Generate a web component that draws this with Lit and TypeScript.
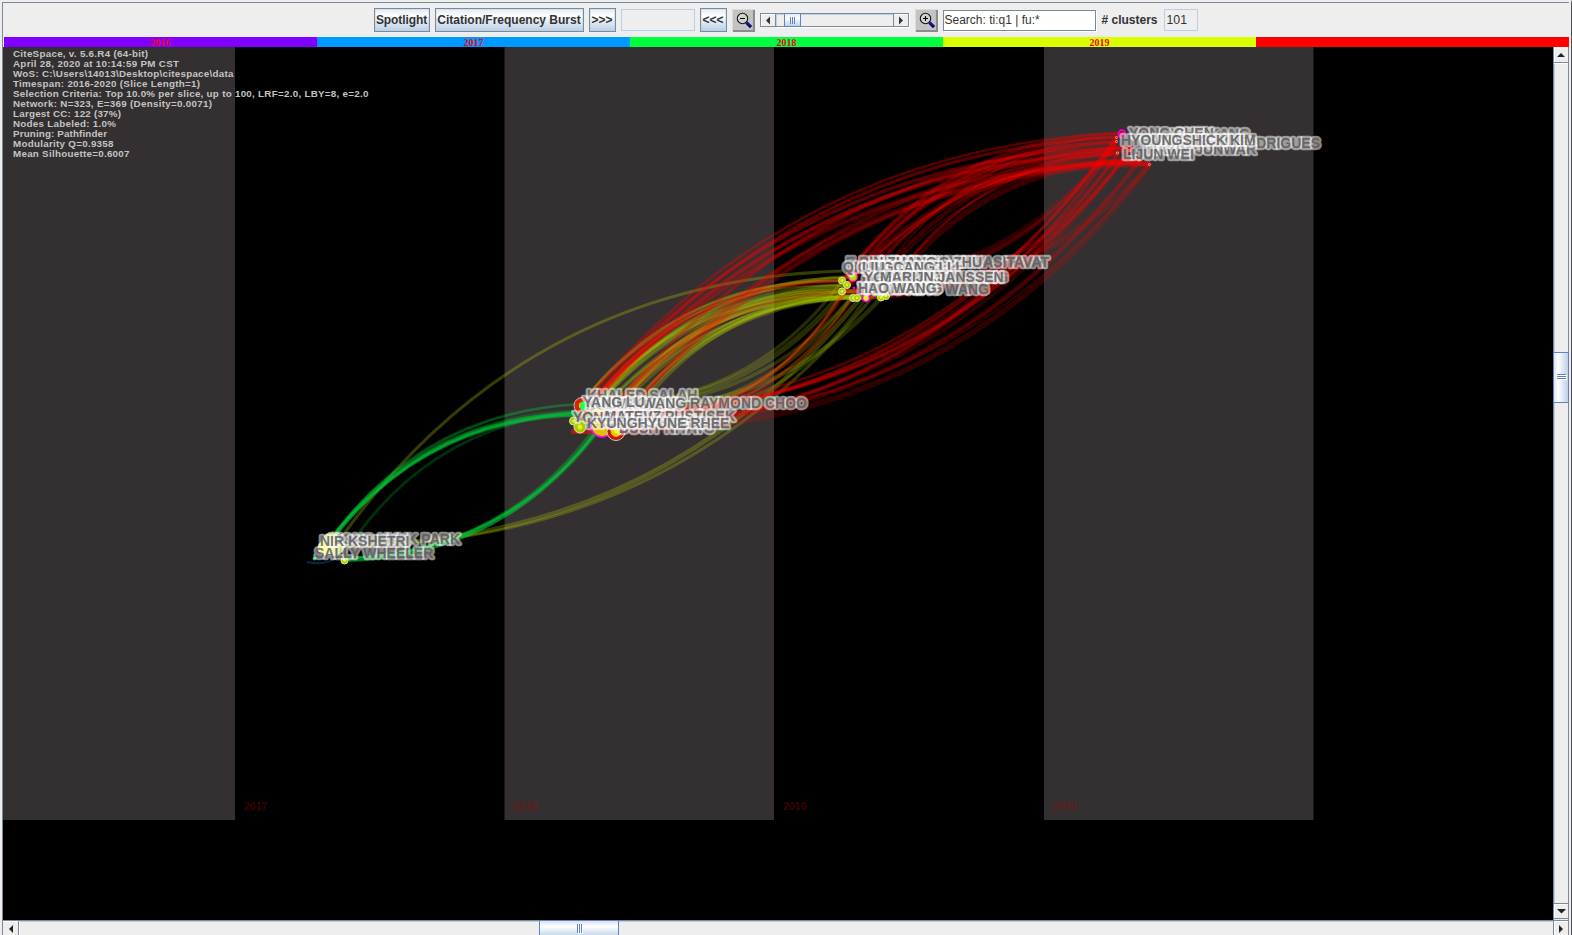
import { LitElement, html, css, svg } from "lit";
import { customElement } from "lit/decorators.js";

type Pt = [number, number];

interface Bundle {
  from: Pt[];
  to: Pt[];
  bend: number;
  count: number;
  color: string;
  alpha: number;
}

interface Label {
  text: string;
  x: number;
  y: number;
  end?: boolean;
}

const RED = "#ff0000";
const YELLOW = "#c0dc00";
const GREEN = "#00d83c";

const hub2018: Pt[] = [[580, 405], [600, 426], [585, 411], [608, 420], [598, 414], [615, 432], [582, 424]];
const hub2019: Pt[] = [[842, 281], [852, 297], [847, 286], [866, 298], [853, 277], [882, 297], [842, 292], [857, 291]];
const hub2020: Pt[] = [[1121, 133], [1117, 142], [1150, 164], [1116, 137], [1128, 151], [1118, 154], [1140, 160], [1133, 147]];

const bundles: Bundle[] = [
  { from: [[336, 545]], to: [[842, 271]], bend: -1, count: 1, color: YELLOW, alpha: 0.28 },
  { from: [[344, 545]], to: [[878, 290], [870, 286]], bend: 0.97, count: 2, color: YELLOW, alpha: 0.25 },
  { from: [[325, 548], [321, 553], [328, 544]], to: [[580, 404], [579, 414], [581, 412], [582, 415]], bend: -1, count: 9, color: GREEN, alpha: 0.2 },
  { from: [[345, 553]], to: [[585, 411]], bend: -1, count: 1, color: GREEN, alpha: 0.22 },
  { from: [[344, 560], [338, 558], [325, 550]], to: [[602, 424], [598, 425], [606, 420]], bend: 1, count: 8, color: GREEN, alpha: 0.2 },
  { from: hub2018, to: hub2019, bend: -1, count: 19, color: YELLOW, alpha: 0.24 },
  { from: [[620, 420], [625, 428]], to: [[866, 298], [857, 293]], bend: -1.02, count: 2, color: YELLOW, alpha: 0.25 },
  { from: [[585, 411], [604, 420]], to: [[842, 281], [860, 291]], bend: -1, count: 3, color: RED, alpha: 0.2 },
  { from: [[600, 405], [640, 424], [615, 416]], to: hub2019, bend: 1, count: 9, color: YELLOW, alpha: 0.2 },
  { from: [[640, 425]], to: [[853, 277], [857, 291]], bend: 1, count: 3, color: RED, alpha: 0.2 },
  { from: [[582, 405], [600, 426], [585, 411], [580, 418], [614, 430]], to: hub2020, bend: -0.9, count: 18, color: RED, alpha: 0.19 },
  { from: [[600, 414], [615, 432], [608, 420], [598, 414], [601, 428]], to: hub2020, bend: 1, count: 16, color: RED, alpha: 0.18 },
  { from: hub2019, to: hub2020, bend: -1, count: 17, color: RED, alpha: 0.21 },
  { from: hub2019, to: hub2020, bend: 1, count: 9, color: RED, alpha: 0.16 },
];

const widths = [3, 2, 4.5, 2.5, 5.5, 2, 3.5];

const labels: Label[] = [
  { text: "JONG HYUK PARK", x: 460, y: 544, end: true },
  { text: "NIR KSHETRI", x: 320, y: 545.5 },
  { text: "SALLY WHEELER", x: 315, y: 558 },
  { text: "PENG ZHANG", x: 590, y: 410 },
  { text: "KHALED SALAH", x: 587, y: 400 },
  { text: "XUEYING LIU", x: 586, y: 409 },
  { text: "KIM-KWANG RAYMOND CHOO", x: 807, y: 408, end: true },
  { text: "DUSIT NIYATO", x: 715, y: 432.5, end: true },
  { text: "YANG LU", x: 583, y: 407 },
  { text: "QIANG WANG", x: 605, y: 425 },
  { text: "MARKO HOLBL", x: 602, y: 427 },
  { text: "YONG YUAN", x: 573, y: 421.5 },
  { text: "MATEVZ PUSTISEK", x: 735, y: 420.5, end: true },
  { text: "KYUNGHYUNE RHEE", x: 587, y: 427.5 },
  { text: "E BURAK PUNYASITAVAT", x: 1049, y: 267, end: true },
  { text: "LIANMING ZHU", x: 982, y: 267, end: true },
  { text: "E BIN ZHANG", x: 846, y: 267 },
  { text: "QI LIU", x: 843, y: 272 },
  { text: "GUOCANG LI", x: 870, y: 272 },
  { text: "QINGCANG LI", x: 951, y: 272, end: true },
  { text: "LIU", x: 862, y: 272 },
  { text: "LEI ZHANG", x: 862, y: 287 },
  { text: "YGE LIANG", x: 864, y: 282 },
  { text: "GUANJUN JIANG", x: 1008, y: 281.5, end: true },
  { text: "MARIJN JANSSEN", x: 880, y: 281.5 },
  { text: "FENG XIAO WANG", x: 989, y: 294, end: true },
  { text: "YAO HUANG", x: 858, y: 293 },
  { text: "HAO WANG", x: 858, y: 293 },
  { text: "JOEL J P C RODRIGUES", x: 1320, y: 147.5, end: true },
  { text: "XIAO KANG", x: 1250, y: 139, end: true },
  { text: "YONG CHEN", x: 1129, y: 137.5 },
  { text: "NAZIM JUNWAR", x: 1256, y: 154, end: true },
  { text: "HAYOUNG KIM", x: 1140, y: 145 },
  { text: "HYOUNGSHICK KIM", x: 1121, y: 144.5 },
  { text: "LIJUN WEI", x: 1123, y: 158.5 },
];

const info = [
  { t: "CiteSpace, v. 5.6.R4 (64-bit)", w: 135 },
  { t: "April 28, 2020 at 10:14:59 PM CST", w: 166 },
  { t: "WoS: C:\\Users\\14013\\Desktop\\citespace\\data", w: 220.5 },
  { t: "Timespan: 2016-2020 (Slice Length=1)", w: 187 },
  { t: "Selection Criteria: Top 10.0% per slice, up to 100, LRF=2.0, LBY=8, e=2.0", w: 355.5 },
  { t: "Network: N=323, E=369 (Density=0.0071)", w: 199 },
  { t: "Largest CC: 122 (37%)", w: 108 },
  { t: "Nodes Labeled: 1.0%", w: 103 },
  { t: "Pruning: Pathfinder", w: 94 },
  { t: "Modularity Q=0.9358", w: 100.5 },
  { t: "Mean Silhouette=0.6007", w: 116.5 },
];

// Quadratic arc whose control point sits a quarter chord off the midpoint.
function arc(a: Pt, b: Pt, bend: number): string {
  const dx = b[0] - a[0];
  const dy = b[1] - a[1];
  const cx = (a[0] + b[0]) / 2 - dy * 0.25 * bend;
  const cy = (a[1] + b[1]) / 2 + dx * 0.25 * bend;
  return `M${a[0]} ${a[1]}Q${cx.toFixed(1)} ${cy.toFixed(1)} ${b[0]} ${b[1]}`;
}

@customElement("app-root")
export class AppRoot extends LitElement {
  static styles = css`
    :host {
      display: block;
      width: 100vw;
      height: 100vh;
      overflow: hidden;
      background: #eee;
      font-family: "Liberation Sans", Arial, sans-serif;
      color: #333;
    }
    * { box-sizing: border-box; }
    .window {
      height: 100%;
      display: grid;
      grid-template-rows: 35px 10px 1fr;
      padding: 0 2px 0 2px;
      border-top: 2px solid #eee;
      background: linear-gradient(#7a8a99, #7a8a99) 2px 0 / 1px 100% no-repeat, #eee;
      border-right: 1px solid #4b4b50;
    }
    .toolbar {
      display: flex;
      align-items: center;
      justify-content: center;
      gap: 5px;
      border-top: 1px solid #7a8a99;
      font-size: 12px;
    }
    .btn {
      height: 24px;
      border: 1px solid #7a8a99;
      box-shadow: inset 0 0 0 1px #b8cfe566;
      background: linear-gradient(#e2ebf4, #fff 32%, #eef3f8 45%, #b8cfe5);
      font-weight: bold;
      display: flex;
      align-items: center;
      justify-content: center;
      white-space: nowrap;
    }
    .spot { width: 56px; letter-spacing: -0.15px; }
    .spot { letter-spacing: -0.1px; }
    .burst { width: 149px; }
    .nav { width: 27px; }
    .field {
      height: 22px;
      border: 1px solid #b8cfe5;
      width: 74px;
      padding-left: 2px;
      line-height: 20px;
      font-size: 12.3px;
    }
    .num { width: 34px; margin-left: 1px; }
    .search {
      width: 153px;
      height: 21px;
      background: #fff;
      border: 1px solid #7a8a99;
      box-shadow: 1px 1px 0 #fff;
      padding-left: 1px;
      line-height: 19px;
      white-space: nowrap;
    }
    .zoom { width: 23px; height: 23px; display: block; }
    .clusters { font-weight: bold; width: 56px; margin-left: 1px; white-space: nowrap; }
    .slider { width: 150px; height: 15px; display: block; }
    .years {
      display: grid;
      grid-template-columns: repeat(5, 1fr);
      margin-left: 2px;
      font: bold 10px/11px "Liberation Serif", serif;
      color: #f00020;
      text-align: center;
    }
    .y16 { background: #8000ff; }
    .y17 { background: #0099ff; }
    .y18 { background: #00ff40; }
    .y19 { background: #d9ff00; }
    .y20 { background: #ff0000; color: #ff0000; }
    .view {
      display: grid;
      grid-template-columns: 1550px 16px;
      grid-template-rows: 873px 15px;
      margin-left: 1px;
    }
    svg { display: block; }
    .label {
      font: bold 14px "Liberation Sans", Arial, sans-serif;
      fill: #5c5c5c;
      fill-opacity: 0.85;
      stroke: #fff;
      stroke-opacity: 0.54;
      stroke-width: 4.5px;
      stroke-linejoin: round;
      paint-order: stroke;
    }
    .info { font: bold 9.8px "Liberation Sans", Arial, sans-serif; fill: #c4c4c4; }
    .slice { font: bold 10.5px "Liberation Sans", Arial, sans-serif; fill: #a80000; fill-opacity: 0.38; }
  `;

  private edges() {
    return bundles.map((b) =>
      Array.from({ length: b.count }, (_, i) => {
        const a = b.from[(i * 3 + (i >> 2)) % b.from.length];
        const e = b.to[(i * 5 + (i >> 3)) % b.to.length];
        return svg`<path d=${arc(a, e, b.bend)} fill="none" stroke=${b.color}
          stroke-opacity=${b.alpha} stroke-width=${widths[(i * 2) % 7]} />`;
      })
    );
  }

  private node(x: number, y: number, r: number, ring = "#d8e8a0", fill = "#a8cc00") {
    return svg`<circle cx=${x} cy=${y} r=${r} fill=${fill} stroke=${ring} stroke-width="1" />
      <circle cx=${x} cy=${y} r=${r * 0.4} fill="#ffff30" fill-opacity="0.7" />`;
  }

  private nodes() {
    return svg`
      <path d="M307 562Q323 566 336 558" fill="none" stroke="#003a5c" stroke-width="2" stroke-opacity=".75" />
      <rect x="571" y="429" width="34" height="5" rx="2" fill="#cc1818" fill-opacity=".75" />
      ${this.node(333, 544, 12, "#aaa", "#c8d860")}
      ${this.node(325, 548, 7, "#dde890", "#e0e830")}
      ${this.node(344.5, 560.5, 3.5)}
      ${this.node(314.5, 558.5, 1.5, "#20d070", "#20d070")}
      ${this.node(582, 405.5, 8, "#bbb", "#e02000")}
      <circle cx="584" cy="406" r="4.5" fill="#20ff40" />
      ${this.node(573.5, 421, 4)}
      ${this.node(580, 427, 6)}
      <circle cx="602" cy="426" r="11" fill="#e0c000" stroke="#ff00ff" stroke-width="1.6" />
      ${this.node(616, 431.5, 9, "#ccc", "#d01000")}
      ${this.node(616, 431.5, 5, "#e0c000", "#e0d000")}
      ${this.node(598, 411, 5, "#ff5020", "#ffd060")}
      ${([[842, 280.5], [842, 291.5], [847, 285], [853, 298], [857, 298], [881, 297.5], [886, 296]] as Pt[]).map(([x, y]) => this.node(x, y, 3.5))}
      <circle cx="853" cy="277" r="4" fill="#b8dc00" stroke="#ff40d0" stroke-width="1.4" />
      <circle cx="866" cy="298" r="3.5" fill="#e8f020" stroke="#ff00e0" stroke-width="1.6" />
      <circle cx="854" cy="288" r="1.3" fill="#ff00e0" />
      <ellipse cx="1122" cy="134" rx="3.5" ry="4" fill="#c00030" stroke="#ff00e0" stroke-width="1.5" />
      ${([[1116.5, 137.5], [1116.5, 141.5], [1117.5, 153], [1139, 160], [1149.5, 164.5], [1129.5, 150.5]] as Pt[]).map(
        ([x, y]) => svg`<circle cx=${x} cy=${y} r="1.1" fill="#d00000" stroke="#ffb0b0" stroke-width=".8" />`
      )}`;
  }

  private graph() {
    return html`<svg width="1550" height="873" viewBox="3 47 1550 873">
      <rect x="3" y="47" width="1550" height="873" fill="#000" />
      ${[[3, 232], [504.5, 269.5], [1044, 269.5]].map(
        ([x, w]) => svg`<rect x=${x} y="47" width=${w} height="773" fill="#342f30" />`
      )}
      ${this.edges()}
      ${this.nodes()}
      ${labels.map(
        (l) => svg`<text class="label" x=${l.x} y=${l.y} text-anchor=${l.end ? "end" : "start"}>${l.text}</text>`
      )}
      ${info.map(
        (l, i) => svg`<text class="info" x="13" y=${57 + i * 10} textLength=${l.w}>${l.t}</text>`
      )}
      ${["2017", "2018", "2019", "2020"].map(
        (t, i) => svg`<text class="slice" x=${244 + i * 269.6} y="810">${t}</text>`
      )}
    </svg>`;
  }

  private magnifier(plus: boolean) {
    return html`<svg class="zoom" viewBox="0 0 23 23">
      <rect width="23" height="23" fill="#c3c3c3" />
      <path d="M.5 23V.5H23" fill="none" stroke="#dcdcdc" />
      <path d="M1 22H22V1" fill="none" stroke="#8c8c8c" stroke-width="2.2" />
      <circle cx="10.5" cy="9.5" r="5.2" fill="#d3d3d3" stroke="#111" stroke-width="1.1" />
      <path d="M8 9.5h5${plus ? "M10.5 7v5" : ""}" stroke="#000" stroke-width="1.1" />
      <path d="M14.5 13.5L19 18.2" stroke="#000060" stroke-width="3.2" />
      <path d="M14.5 13L18.5 17.2" stroke="#3030c8" stroke-width="1" />
    </svg>`;
  }

  private slider() {
    return html`<svg class="slider" viewBox="0 0 150 15">
      <defs><linearGradient id="thumb" x2="0" y2="1">
        <stop offset="0" stop-color="#dde8f3" /><stop offset=".35" stop-color="#fff" />
        <stop offset="1" stop-color="#b8cfe5" /></linearGradient></defs>
      <rect x=".5" y=".5" width="148" height="13" fill="#eee" stroke="#7a8a99" />
      <path d="M1.5 13V1.5H148M17 14.5H150M149.5 0V15" stroke="#fff" fill="none" />
      <path d="M15.5 1V13M133.5 1V13" stroke="#7a8a99" />
      <path d="M16 1.5H133M16.5 1V13" stroke="#b8cfe5" />
      <path d="M10 3.5V11.5L6 7.5ZM139 3.5V11.5L143 7.5Z" fill="#333" />
      <rect x="24.5" y=".5" width="16" height="13" fill="url(#thumb)" stroke="#6382bf" />
      <path d="M30.5 4V11M32.5 4V11M34.5 4V11" stroke="#6382bf" />
    </svg>`;
  }

  private vbar() {
    return html`<svg width="16" height="873" viewBox="0 0 16 873">
      <defs><linearGradient id="v"><stop offset="0" stop-color="#d3e0ee" /><stop offset=".3" stop-color="#fff" />
        <stop offset="1" stop-color="#b8cfe5" /></linearGradient></defs>
      <rect width="16" height="873" fill="#eee" />
      <path d="M.5 0V873M15.5 0V873" stroke="#7a8a99" />
      <path d="M1.5 17V856" stroke="#b8cfe5" />
      <path d="M0 15.5H16M0 856.5H16M0 871.5H16" stroke="#7a8a99" />
      <path d="M1.5 0V15M1.5 857V871M1 16.5H15M1 857.5H15" stroke="#fff" />
      <path d="M4 10H12L8 6ZM4 862H13L8.5 866.5Z" fill="#222" />
      <rect x=".5" y="305.5" width="15" height="50" fill="url(#v)" stroke="#6382bf" />
      <path d="M4 327.5H13M4 329.5H13M4 331.5H13" stroke="#fff" transform="translate(1 1)" />
      <path d="M4 327.5H13M4 329.5H13M4 331.5H13" stroke="#6382bf" />
    </svg>`;
  }

  private hbar() {
    return html`<svg width="1566" height="15" viewBox="0 0 1566 15">
      <defs><linearGradient id="h" x2="0" y2="1"><stop offset="0" stop-color="#d3e0ee" /><stop offset=".35" stop-color="#fff" />
        <stop offset="1" stop-color="#b8cfe5" /></linearGradient></defs>
      <rect width="1566" height="15" fill="#eee" />
      <path d="M0 .5H1566M15.5 0V15M1550.5 0V15M1565.5 0V15" stroke="#7a8a99" />
      <path d="M16 1.5H1550" stroke="#b8cfe5" />
      <path d="M0 1.5H15M16.5 1V15M1551 1.5H1565M1551.5 1V15" stroke="#fff" />
      <path d="M10 5V13L6 9ZM1556 5V13L1560 9Z" fill="#222" />
      <rect x="536.5" y=".5" width="79" height="17" fill="url(#h)" stroke="#6382bf" />
      <path d="M574.5 4V13M576.5 4V13M578.5 4V13" stroke="#fff" transform="translate(1 1)" />
      <path d="M574.5 4V13M576.5 4V13M578.5 4V13" stroke="#6382bf" />
    </svg>`;
  }

  render() {
    return html`<div class="window">
      <div class="toolbar">
        <div class="btn spot">Spotlight</div>
        <div class="btn burst">Citation/Frequency Burst</div>
        <div class="btn nav">&gt;&gt;&gt;</div>
        <div class="field"></div>
        <div class="btn nav">&lt;&lt;&lt;</div>
        ${this.magnifier(false)} ${this.slider()} ${this.magnifier(true)}
        <div class="search">Search: ti:q1 | fu:*</div>
        <div class="clusters"># clusters</div>
        <div class="field num">101</div>
      </div>
      <div class="years">
        <div class="y16">2016</div><div class="y17">2017</div><div class="y18">2018</div>
        <div class="y19">2019</div><div class="y20">2020</div>
      </div>
      <div class="view">${this.graph()}${this.vbar()}${this.hbar()}</div>
    </div>`;
  }
}
